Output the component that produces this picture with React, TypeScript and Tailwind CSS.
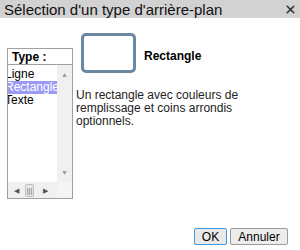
import { X } from "lucide-react";

const items = ["Ligne", "Rectangle", "Texte"];

export default function App() {
  return (
    <div
      className="w-[300px] h-[250px] bg-white flex flex-col text-[#000] overflow-hidden"
      style={{ fontFamily: '"Liberation Sans", Arial, sans-serif' }}
    >
      <div className="h-[18px] bg-[#d2d2d2] flex items-center justify-between pl-[4px] pr-[3px]">
        <span className="text-[15px] leading-none text-[#111]">Sélection d'un type d'arrière-plan</span>
        <X size={13} strokeWidth={3} className="text-[#333]" />
      </div>

      <div className="flex-1 flex pt-[15px] pl-[7px]">
        <div className="mt-[15px] w-[66px] h-[151px] border border-[#a0a0a0] flex flex-col">
          <div className="h-[16px] border-b border-[#a0a0a0] pl-[4px] flex items-center text-[12px] font-bold leading-none">
            Type :
          </div>
          <div className="flex-1 flex min-h-0">
            <div className="flex-1 overflow-hidden pt-[3px]">
              {items.map((it) => (
                <div
                  key={it}
                  className={`h-[13px] text-[12px] leading-[13px] -ml-[3px] whitespace-nowrap ${
                    it === "Rectangle" ? "bg-[#9b9bf5] text-white" : ""
                  }`}
                >
                  {it}
                </div>
              ))}
            </div>
            <div className="w-[15px] bg-[#f0f0f0] flex flex-col items-center justify-between py-[6px]">
              <span className="text-[7px] leading-none text-[#999]">▲</span>
              <span className="text-[7px] leading-none text-[#999]">▼</span>
            </div>
          </div>
          <div className="h-[16px] flex bg-[#f0f0f0]">
            <div className="flex-1 flex items-center pl-[6px]">
              <span className="text-[7px] leading-none text-[#555]">◀</span>
              <div className="ml-[6px] w-[9px] h-[13px] border border-[#bdbdbd] rounded-[2px] bg-[#e8e8e8] flex items-center justify-center text-[7px] text-[#666] leading-none">
                |||
              </div>
              <span className="ml-[9px] text-[7px] leading-none text-[#555]">▶</span>
            </div>
            <div className="w-[15px] bg-[#f4f4f4]" />
          </div>
        </div>

        <div className="flex-1 flex flex-col pl-[3px]">
          <div className="flex items-center ml-[5px]">
            <div className="w-[55px] h-[40px] rounded-[5px] border-[3px] border-[#6b88a3] bg-white" />
            <span className="ml-[8px] mt-[6px] text-[12px] font-bold">Rectangle</span>
          </div>
          <p className="mt-[16px] text-[12px] leading-[13px] text-[#222] w-[190px]">
            Un rectangle avec couleurs de remplissage et coins arrondis optionnels.
          </p>
          <div className="flex-1" />
          <div className="flex justify-end gap-[3px] pr-[12px] pb-[5px]">
            <button className="w-[33px] h-[17px] border border-[#3c9be0] rounded-[2px] bg-[#e9e9e9] text-[12px] leading-none">
              OK
            </button>
            <button className="w-[58px] h-[17px] border border-[#9a9a9a] rounded-[2px] bg-[#ececec] text-[12px] leading-none">
              Annuler
            </button>
          </div>
        </div>
      </div>
    </div>
  );
}
